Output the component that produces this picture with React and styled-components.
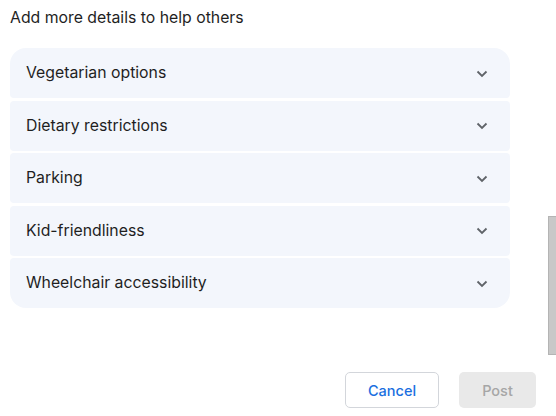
import React from 'react';
import styled, { createGlobalStyle } from 'styled-components';

const GlobalStyle = createGlobalStyle`
  html, body {
    margin: 0;
    padding: 0;
    background: #ffffff;
  }
  body {
    font-family: Inter, Roboto, "Noto Sans", Arial, sans-serif;
    color: #1f1f1f;
  }
`;

const Page = styled.div`
  position: relative;
  width: 556px;
  height: 416px;
  overflow: hidden;
  box-sizing: border-box;
  padding: 0 46px 0 10px;
  display: flex;
  flex-direction: column;
`;

const Heading = styled.h2`
  margin: 7px 0 0;
  font-size: 15.8px;
  font-weight: 400;
  line-height: 22px;
  color: #1f1f1f;
`;

const List = styled.div`
  margin-top: 19px;
  display: flex;
  flex-direction: column;
  gap: 2.5px;
`;

const Item = styled.button`
  height: 50px;
  display: flex;
  align-items: center;
  justify-content: space-between;
  padding: 0 22px 1px 16px;
  border: none;
  background: #f3f6fc;
  border-radius: 4px;
  font-family: inherit;
  font-size: 15.8px;
  color: #1f1f1f;
  cursor: pointer;
  text-align: left;

  &:first-child {
    border-top-left-radius: 16px;
    border-top-right-radius: 16px;
  }
  &:last-child {
    border-bottom-left-radius: 16px;
    border-bottom-right-radius: 16px;
  }
`;

const Chevron = styled.svg`
  width: 12px;
  height: 8px;
  flex: none;
  margin-top: 2px;
`;

const Footer = styled.div`
  margin-top: auto;
  margin-bottom: 8px;
  margin-right: -26px;
  display: flex;
  justify-content: flex-end;
  gap: 20px;
`;

const Button = styled.button`
  height: 36px;
  box-sizing: border-box;
  padding: 0;
  width: ${({ $w }) => $w}px;
  border-radius: 5px;
  font-family: inherit;
  font-size: 14.5px;
  font-weight: 500;
  border: ${({ $primary }) => ($primary ? 'none' : '1px solid #d3d6db')};
  background: ${({ $primary }) => ($primary ? '#e9e9e9' : '#ffffff')};
  color: ${({ $primary }) => ($primary ? '#a6a6a6' : '#1a6fe0')};
`;

const ScrollThumb = styled.div`
  position: absolute;
  left: 548px;
  top: 216px;
  width: 8px;
  height: 139px;
  box-sizing: border-box;
  background: #c8c8c8;
  border: 1px solid #b4b4b4;
  border-right: none;
`;

const items = [
  'Vegetarian options',
  'Dietary restrictions',
  'Parking',
  'Kid-friendliness',
  'Wheelchair accessibility',
];

export default function App() {
  return (
    <>
      <GlobalStyle />
      <Page>
        <Heading>Add more details to help others</Heading>
        <List>
          {items.map((label) => (
            <Item key={label}>
              <span>{label}</span>
              <Chevron viewBox="0 0 12 8">
                <path d="M1.5 1.5 L6 6 L10.5 1.5" fill="none" stroke="#5f6368" strokeWidth="1.8" />
              </Chevron>
            </Item>
          ))}
        </List>
        <Footer>
          <Button $w={94}>Cancel</Button>
          <Button $w={77} $primary>Post</Button>
        </Footer>
        <ScrollThumb />
      </Page>
    </>
  );
}
